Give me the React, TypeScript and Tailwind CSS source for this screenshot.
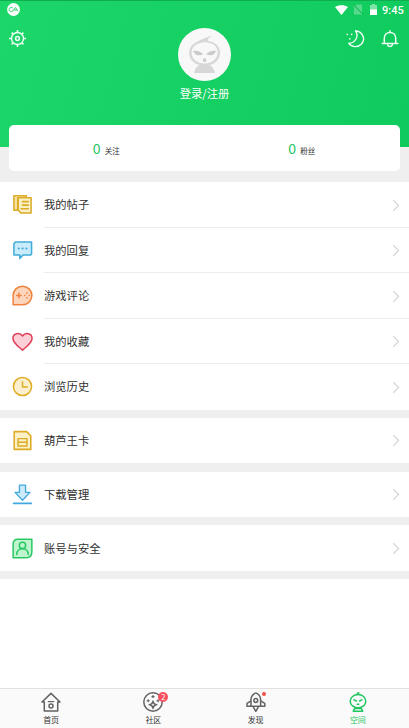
import * as React from "react";

const menuGroups = [
  [
    { label: "我的帖子", icon: <PostsIcon /> },
    { label: "我的回复", icon: <ReplyIcon /> },
    { label: "游戏评论", icon: <GameIcon /> },
    { label: "我的收藏", icon: <HeartIcon /> },
    { label: "浏览历史", icon: <ClockIcon /> },
  ],
  [{ label: "葫芦王卡", icon: <CardIcon /> }],
  [{ label: "下载管理", icon: <DownloadIcon /> }],
  [{ label: "账号与安全", icon: <AccountIcon /> }],
];

function MenuSvg(props: { color: string; fill: string; children: React.ReactNode }) {
  return (
    <svg className="h-[21px] w-[21px]" viewBox="0 0 22 22" fill={props.fill} stroke={props.color} strokeWidth="1.6" strokeLinecap="round" strokeLinejoin="round">
      {props.children}
    </svg>
  );
}

function PostsIcon() {
  return (
    <MenuSvg color="#dcab28" fill="#fbf0c4">
      <path d="M2 1.8h13v2.7H6V17H2z" fill="#f7e3a0" />
      <path d="M6.5 4H20v16H9.5l-3-3z" />
      <path d="M11 8h6M11 11.7h6M9.5 15.5H17" strokeWidth="1.7" />
    </MenuSvg>
  );
}

function ReplyIcon() {
  return (
    <MenuSvg color="#41acd8" fill="#c9ecfc">
      <path d="M3.5 2.2h17v12.6l-1.2 1H11.5L8.2 19.5v-3.7H2V4z" />
      <path d="M7 9h.2M11 9h.2M15 9h.2" strokeWidth="2.1" />
    </MenuSvg>
  );
}

function GameIcon() {
  return (
    <MenuSvg color="#ef8440" fill="#fcd5bc">
      <path d="M1.2 20.8V11A9.8 9.8 0 1 1 11 20.8z" />
      <path d="M5 11h4.6M7.3 8.7v4.6" />
      <path d="M15.7 8.5v.1M15.7 13.4v.1M13.2 11h.1M18.1 11h.1" strokeWidth="1.7" />
    </MenuSvg>
  );
}

function HeartIcon() {
  return (
    <MenuSvg color="#e03f59" fill="#fdd0d7">
      <path d="M11 20C7 16.4 1 12.8 1 7.6C1 2.6 7.8.7 11 5.2C14.2.7 21 2.6 21 7.6C21 12.8 15 16.4 11 20z" />
    </MenuSvg>
  );
}

function ClockIcon() {
  return (
    <MenuSvg color="#e0ad27" fill="#fbf0ce">
      <circle cx="11" cy="11" r="9.5" />
      <path d="M11 6v5.5h5" fill="none" />
    </MenuSvg>
  );
}

function CardIcon() {
  return (
    <MenuSvg color="#dcaa25" fill="#fcf0c7">
      <path d="M2.3 1.7h13l4.4 4.4v14.2H2.3z" />
      <path d="M6.3 9h9.4v7.7H6.3zM6.3 12.8h9.4" strokeWidth="1.5" />
    </MenuSvg>
  );
}

function DownloadIcon() {
  return (
    <MenuSvg color="#41a9df" fill="#cdeafc">
      <path d="M7.8 1.2h6.4v7.6h4.6L11 17L3.2 8.8h4.6z" strokeWidth="1.4" />
      <path d="M1.7 20.3h18.6" strokeWidth="1.7" />
    </MenuSvg>
  );
}

function AccountIcon() {
  return (
    <MenuSvg color="#2bc965" fill="#bef5cf">
      <path d="M6 1.2h14.8v13.3c0 4.3-2 6.3-6 6.3H1.2V6.2C1.2 3 3 1.2 6 1.2z" />
      <circle cx="11" cy="7.8" r="3.3" />
      <path d="M5 17.2c0-8 12-8 12 0" fill="none" />
    </MenuSvg>
  );
}

function StatusBar() {
  return (
    <div className="flex h-[18px] items-center border-t border-[#10ac50] pl-[7px] pr-[6px] text-white">
      <svg className="h-[13px] w-[13px]" viewBox="0 0 13 13" fill="none">
        <circle cx="6.5" cy="6.5" r="6.4" fill="#fff" />
        <path d="M6 5C3.7 3.9 2 5 2 6.5S3.7 9.1 6 8M5.5 8.2L8.5 4.5L11 8.2M7 7h3" stroke="#35ce70" strokeWidth="1" />
      </svg>
      <svg className="ml-auto h-[10px] w-[13px]" viewBox="0 0 13 10" fill="#fff">
        <path d="M0 2C3.5-.5 9.5-.5 13 2L6.5 10z" />
      </svg>
      <svg className="ml-[5px] h-[11px] w-[10px]" viewBox="0 0 10 11">
        <path d="M3.5.5H9v10H1V3z" fill="#56d98b" />
        <path d="M.5 1L9.5 10.5" stroke="#16bd58" strokeWidth="1.6" />
        <path d="M.5 2L8.5 10.5" stroke="#75dfa0" strokeWidth=".9" />
      </svg>
      <svg className="ml-[7px] h-[11px] w-[7px]" viewBox="0 0 7 11">
        <path d="M2 0h3v1h2v10H0V1h2z" fill="#80e3a8" />
        <path d="M0 5.5h7V11H0z" fill="#fff" />
      </svg>
      <span className="ml-[5px] mt-px w-[21px] font-[Roboto] text-[11px] font-medium leading-none">9:45</span>
    </div>
  );
}

function GearIcon() {
  return (
    <svg className="h-[18px] w-[18px]" viewBox="0 0 18 18" fill="none" stroke="#effff5">
      <circle cx="8.5" cy="8.5" r="6" strokeWidth="1.4" />
      <circle cx="8.5" cy="8.5" r="1.9" strokeWidth="1.5" />
      <path d="M8.5 0v2.4M8.5 14.6V17M0 8.5h2.4M14.6 8.5H17M2.6 2.6l1.6 1.6M12.8 12.8l1.6 1.6M2.6 14.4l1.6-1.6M12.8 4.2l1.6-1.6" strokeWidth="1.6" />
    </svg>
  );
}

function MoonIcon() {
  return (
    <svg className="h-[18px] w-[20px]" viewBox="0 0 20 18" fill="none" stroke="#effff5" strokeWidth="1.4" strokeLinejoin="round" strokeLinecap="round">
      <path d="M10.5 .8C14.2 6 10.3 13.4 3.8 13.3C6.8 17.3 13 17.8 16.5 14C20.8 9.3 18 1.8 10.5 .8z" />
      <path d="M2.2 4.3v.1M6.7 4.3v.1M4.8 8.9v.1" strokeWidth="1.6" />
    </svg>
  );
}

function BellIcon() {
  return (
    <svg className="h-[18px] w-[18px]" viewBox="0 0 18 18" fill="none" stroke="#effff5" strokeWidth="1.5" strokeLinejoin="round" strokeLinecap="round">
      <path d="M3.3 13.3V8C3.3 .5 14.7 .5 14.7 8v5.3M1.2 13.4h15.6M9 .8v1.3M6.7 15c.6 2.1 4 2.1 4.6 0" />
    </svg>
  );
}

function Avatar() {
  return (
    <svg className="h-[53px] w-[53px]" viewBox="0 0 53 53">
      <circle cx="26.5" cy="26.5" r="26.5" fill="#f8f8f8" />
      <path d="M16 45c.8-4 2.7-6.5 5.5-8h10c2.8 1.5 4.7 4 5.5 8z" fill="#d7d7d7" />
      <path d="M34 7.7c-3.5 2.2-4.6 3.6-4 5C37.3 14 42 18.3 42 24.8c0 8-6.7 12.9-15.4 12.9S11.2 32.8 11.2 24.8c0-7.8 6.4-10.9 13.1-13.6c3.2-1.3 6.7-2.9 9.7-3.5z" fill="#d7d7d7" />
      <path d="M19.5 16c4.8-2.3 10.5-2.2 15 .1c3.5 1.8 5.2 4.8 5.2 8.2c0 6.7-5.6 11.2-13.1 11.2s-13.1-4.5-13.1-11.2c0-3.4 2.2-6.6 6-8.3z" fill="#f8f8f8" />
      <path d="M14.8 23c4-.8 8 .4 10.3 3.3c-3.5 1.8-8 1.2-8.9-1.8zM38.4 23c-4-.8-8 .4-10.3 3.3c3.5 1.8 8 1.2 8.9-1.8z" fill="#cbcbcb" />
      <ellipse cx="26.6" cy="32.2" rx="1.6" ry="1.9" fill="#cbcbcb" />
    </svg>
  );
}

function Stat(props: { value: number; label: string }) {
  return (
    <div className="flex flex-1 items-baseline justify-center gap-[4px] pr-px">
      <span className="text-[14px] leading-none text-[#1dc564]">{props.value}</span>
      <span className="text-[7.5px] leading-none text-[#333]">{props.label}</span>
    </div>
  );
}

function MenuRow(props: { label: string; icon: React.ReactNode; divider: boolean }) {
  return (
    <div className="flex h-[45.5px] items-center bg-white pl-[11.7px]">
      {props.icon}
      <div className={`ml-[11.3px] flex h-full flex-1 items-center justify-between pr-[9px] ${props.divider ? "border-b border-[#ececec] pt-[1.5px]" : "pt-[0.5px]"}`}>
        <span className="text-[11.3px] leading-none text-[#303030]">{props.label}</span>
        <svg className="h-[13px] w-[8px]" viewBox="0 0 8 14" fill="none" stroke="#d3d3d3" strokeWidth="1.3">
          <path d="M1 1.2L6.8 7L1 12.8" />
        </svg>
      </div>
    </div>
  );
}

function HomeIcon() {
  return (
    <svg className="h-[20px] w-[20px]" viewBox="0 0 20 20" fill="none" stroke="#626262" strokeWidth="1.5" strokeLinejoin="round">
      <path d="M3.3 10V19H16.7V10H19L10 1.4L1 10z" />
      <circle cx="10" cy="13.9" r="2" />
      <path d="M6.8 9.6h6.4" strokeWidth="1.2" />
    </svg>
  );
}

function CommunityIcon() {
  return (
    <svg className="h-[20px] w-[20px]" viewBox="0 0 20 20" fill="none" stroke="#626262" strokeWidth="1.5">
      <circle cx="10" cy="10" r="9.2" />
      <path d="M10 9.5l1.1 2.2l2.2 1.1l-2.2 1.1L10 16.1l-1.1-2.2l-2.2-1.1l2.2-1.1z" />
      <path d="M3.7 8.7h3M5.2 7.2v3M8.5 4.6h3M10 3.1v3M13.5 8.7h3M15 7.2v3" strokeWidth="1.1" />
    </svg>
  );
}

function RocketIcon() {
  return (
    <svg className="h-[20px] w-[20px]" viewBox="0 0 20 20" fill="none" stroke="#626262" strokeWidth="1.5" strokeLinejoin="round">
      <path d="M5 14.3V7C5.2 4.4 7 2.2 9.8.9c2.8 1.3 4.6 3.5 4.8 6.1v7.3" />
      <circle cx="9.8" cy="8.5" r="1.9" />
      <path d="M5 8.8L1 11.3v3h17.8v-3l-4.2-2.5M7.2 14.8l2.6 4.5l2.6-4.5" />
    </svg>
  );
}

function SpaceIcon() {
  return (
    <svg className="h-[20px] w-[20px]" viewBox="0 0 20 20" fill="none" stroke="#20c661" strokeWidth="1.5" strokeLinejoin="round" strokeLinecap="round">
      <ellipse cx="10" cy="9.2" rx="7.8" ry="6.7" />
      <path d="M9 2.5c.2-.9.8-1.4 1.8-1.7M6 7.8l2.4 1.2M14 7.8l-2.4 1.2M9.2 12.3h1.6M6.7 16.4l-1.4 2.8h9.4l-1.4-2.8z" />
    </svg>
  );
}

function TabItem(props: { label: string; active?: boolean; badge?: React.ReactNode; children: React.ReactNode }) {
  return (
    <div className="flex flex-1 flex-col items-center pt-[3px]">
      <div className="relative">
        {props.children}
        {props.badge}
      </div>
      <span className={`mt-[4px] text-[8px] leading-none ${props.active ? "text-[#20c661]" : "text-[#333]"}`}>{props.label}</span>
    </div>
  );
}

export default function App() {
  return (
    <div className="flex h-[728px] w-[409px] flex-col overflow-hidden bg-white font-['Noto_Sans_CJK_SC',sans-serif]">
      <header className="h-[147px] shrink-0 bg-linear-[105deg,#1cd66a,#0fca5c]">
        <StatusBar />
        <div className="grid grid-cols-3 items-start px-[9px] pt-[10px]">
          <div className="pt-[2px]">
            <GearIcon />
          </div>
          <div className="flex flex-col items-center">
            <Avatar />
            <span className="mt-[6.5px] text-[11.3px] leading-none text-white">登录/注册</span>
          </div>
          <div className="flex justify-end gap-[16px] pr-[1px] pt-[2px]">
            <MoonIcon />
            <BellIcon />
          </div>
        </div>
      </header>

      <div className="h-[35px] shrink-0 bg-[#efefef] px-[9px]">
        <div className="-mt-[22px] flex h-[46px] items-center rounded-[5px] bg-white">
          <Stat value={0} label="关注" />
          <Stat value={0} label="粉丝" />
        </div>
      </div>

      <main className="flex-1">
        {menuGroups.map((group, i) => (
          <section key={i} className="bg-[#efefef] pb-[8.3px]">
            {group.map((item, j) => (
              <MenuRow key={item.label} label={item.label} icon={item.icon} divider={j < group.length - 1} />
            ))}
          </section>
        ))}
      </main>

      <nav className="flex h-[40px] shrink-0 border-t border-[#e0e0e0] bg-[#fafafa]">
        <TabItem label="首页">
          <HomeIcon />
        </TabItem>
        <TabItem
          label="社区"
          badge={
            <span className="absolute -right-[5px] top-0 flex h-[10px] w-[10px] items-center justify-center rounded-full bg-[#f5505e] text-[7.5px] leading-none text-white">
              2
            </span>
          }
        >
          <CommunityIcon />
        </TabItem>
        <TabItem label="发现" badge={<span className="absolute right-0 top-0 h-[4px] w-[4px] rounded-full bg-[#ee5148]" />}>
          <RocketIcon />
        </TabItem>
        <TabItem label="空间" active>
          <SpaceIcon />
        </TabItem>
      </nav>
    </div>
  );
}
